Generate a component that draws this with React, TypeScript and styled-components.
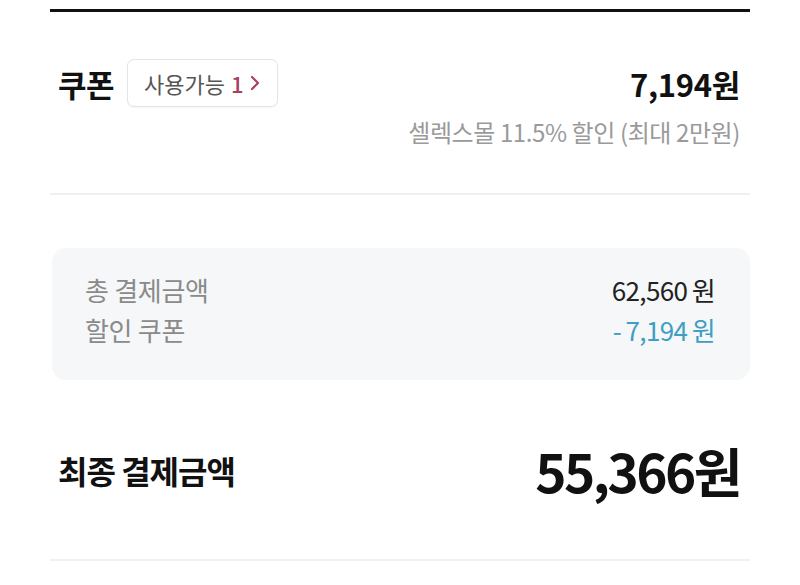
import React, { FC } from 'react';
import styled, { createGlobalStyle } from 'styled-components';

const GlobalStyle = createGlobalStyle`
    html, body {
        margin: 0;
        padding: 0;
        background: #fff;
        font-family: "Noto Sans CJK KR", "Noto Sans", sans-serif;
        color: #111;
    }
`;

const Page = styled.div`
    width: 700px;
    margin: 0 0 0 50px;
    padding-top: 9px;
`;

const TopRule = styled.div`
    height: 3px;
    background: #111;
`;

const CouponSection = styled.section`
    padding: 47px 10px 44px 8px;
    border-bottom: 2px solid #efefef;
`;

const Row = styled.div`
    display: flex;
    align-items: center;
    justify-content: space-between;
`;

const LeftGroup = styled.div`
    display: flex;
    align-items: center;
    gap: 13px;
`;

const SectionTitle = styled.h2`
    margin: 0;
    font-size: 31px;
    font-weight: 700;
    letter-spacing: -0.5px;
    color: #111;
`;

const Badge = styled.button`
    display: flex;
    align-items: center;
    gap: 6px;
    height: 48px;
    padding: 0 17px 0 16px;
    border: 1px solid #e4e4e4;
    border-radius: 7px;
    background: #fff;
    font-family: inherit;
    font-size: 22px;
    color: #555;
    box-shadow: 0 1px 2px rgba(0, 0, 0, 0.04);
`;

const BadgeCount = styled.span`
    color: #a8415b;
    font-weight: 500;
`;

const CouponPrice = styled.div`
    font-size: 31px;
    font-weight: 700;
    color: #111;
    letter-spacing: -0.3px;
`;

const CouponNote = styled.div`
    margin-top: 7px;
    text-align: right;
    font-size: 24px;
    color: #9a9a9a;
    letter-spacing: -0.4px;
`;

const SummaryBox = styled.div`
    margin: 53px 0 0 2px;
    padding: 21px 35px 31px 33px;
    background: #f5f7f9;
    border-radius: 14px;
    display: flex;
    flex-direction: column;
`;

const SummaryRow = styled.div`
    display: flex;
    justify-content: space-between;
    align-items: center;
    height: 40px;
`;

const SummaryLabel = styled.span`
    font-size: 26px;
    color: #8a8a8a;
    letter-spacing: -0.3px;
`;

const SummaryValue = styled.span<{ $accent?: boolean }>`
    font-size: 26px;
    color: ${({ $accent }) => ($accent ? '#3f9ec2' : '#222')};
    letter-spacing: -0.6px;
    word-spacing: -1px;
`;

const FinalSection = styled.section`
    padding: 61px 10px 60px 8px;
    border-bottom: 2px solid #f0f0f0;
`;

const FinalTitle = styled.h2`
    margin: 0;
    font-size: 32px;
    font-weight: 700;
    letter-spacing: -1px;
    color: #111;
`;

const FinalPrice = styled.div`
    font-size: 53px;
    font-weight: 700;
    letter-spacing: -2.5px;
    line-height: 1.1;
    color: #111;
`;

const Chevron: FC = () => (
    <svg width="10" height="16" viewBox="0 0 10 16" fill="none">
        <path d="M2 2 L8 8 L2 14" stroke="#a8415b" strokeWidth="2.2" strokeLinecap="round" strokeLinejoin="round" />
    </svg>
);

const App: FC = () => (
    <>
        <GlobalStyle />
        <Page>
            <TopRule />

            <CouponSection>
                <Row>
                    <LeftGroup>
                        <SectionTitle>쿠폰</SectionTitle>
                        <Badge>
                            사용가능 <BadgeCount>1</BadgeCount>
                            <Chevron />
                        </Badge>
                    </LeftGroup>
                    <CouponPrice>7,194원</CouponPrice>
                </Row>
                <CouponNote>셀렉스몰 11.5% 할인 (최대 2만원)</CouponNote>
            </CouponSection>

            <SummaryBox>
                <SummaryRow>
                    <SummaryLabel>총 결제금액</SummaryLabel>
                    <SummaryValue>62,560 원</SummaryValue>
                </SummaryRow>
                <SummaryRow>
                    <SummaryLabel>할인 쿠폰</SummaryLabel>
                    <SummaryValue $accent>- 7,194 원</SummaryValue>
                </SummaryRow>
            </SummaryBox>

            <FinalSection>
                <Row>
                    <FinalTitle>최종 결제금액</FinalTitle>
                    <FinalPrice>55,366원</FinalPrice>
                </Row>
            </FinalSection>
        </Page>
    </>
);

export default App;
